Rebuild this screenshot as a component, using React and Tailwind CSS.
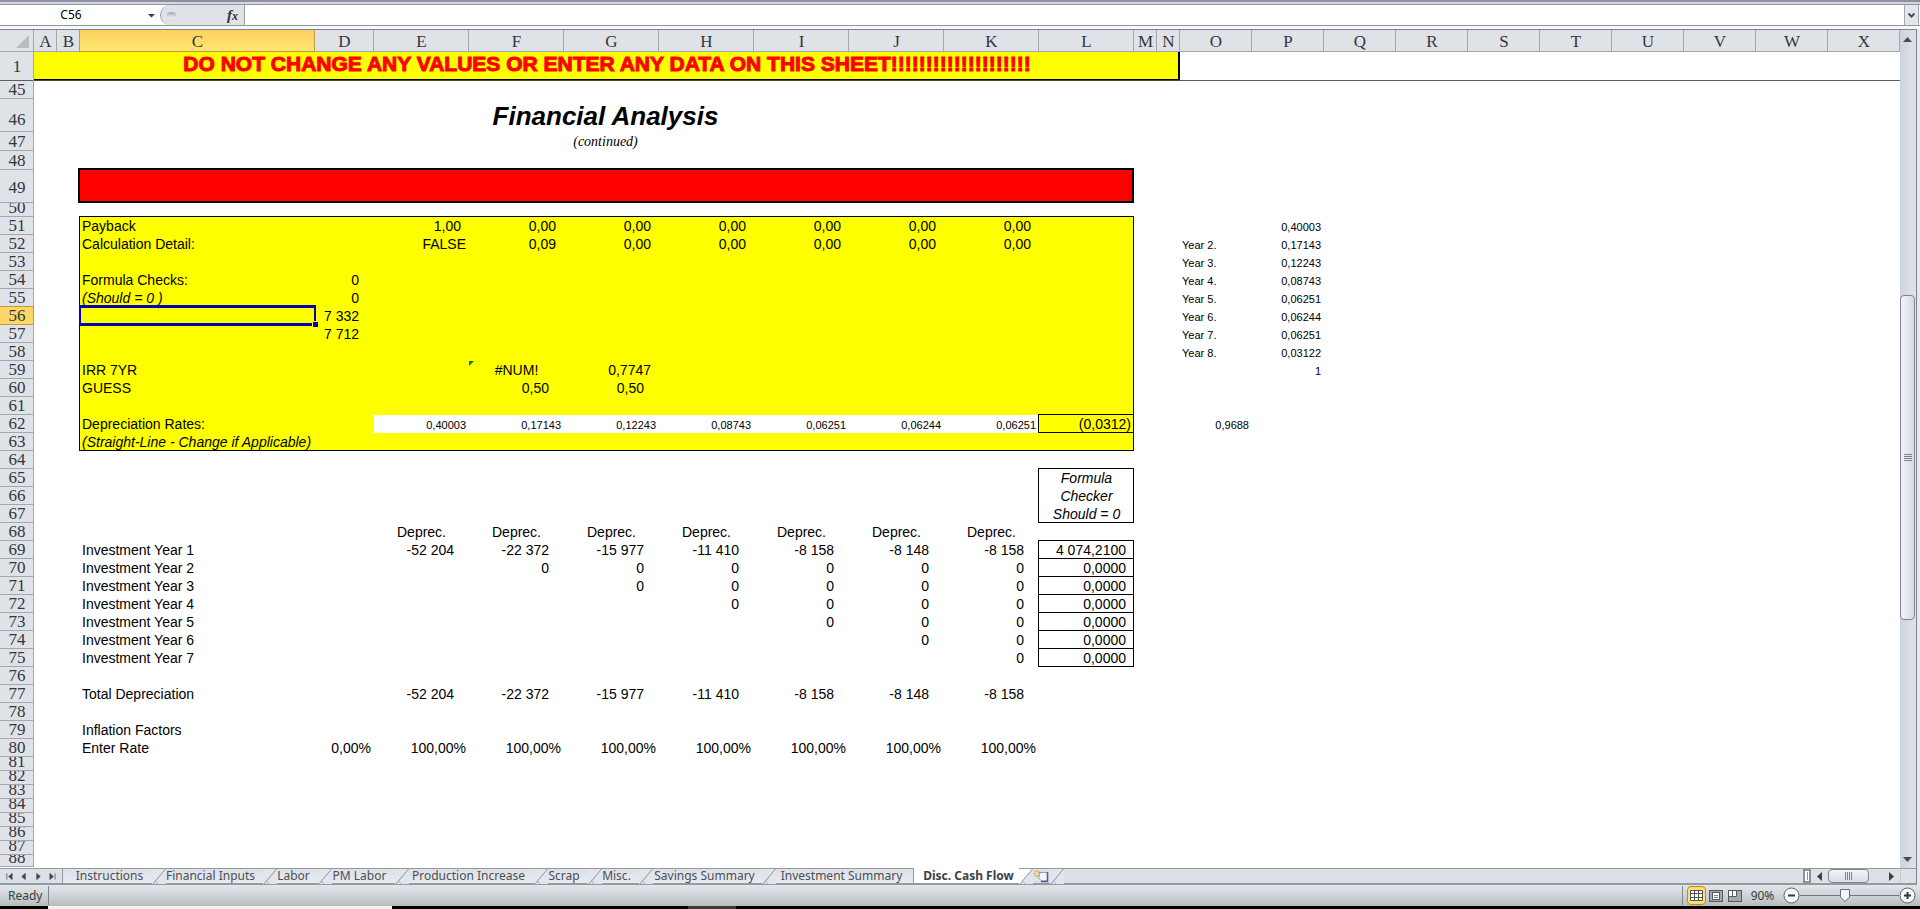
import React from "react";

const COLUMNS = [
  ["A", "w-[23px]"],
  ["B", "w-[23px]"],
  ["C", "w-[235px]"],
  ["D", "w-[59px]"],
  ["E", "w-[95px]"],
  ["F", "w-[95px]"],
  ["G", "w-[95px]"],
  ["H", "w-[95px]"],
  ["I", "w-[95px]"],
  ["J", "w-[95px]"],
  ["K", "w-[95px]"],
  ["L", "w-[95px]"],
  ["M", "w-[23px]"],
  ["N", "w-[23px]"],
  ["O", "w-[72px]"],
  ["P", "w-[72px]"],
  ["Q", "w-[72px]"],
  ["R", "w-[72px]"],
  ["S", "w-[72px]"],
  ["T", "w-[72px]"],
  ["U", "w-[72px]"],
  ["V", "w-[72px]"],
  ["W", "w-[72px]"],
  ["X", ""],
];
const LETTERS = COLUMNS.map(([c]) => c);
const YEARS = ["E", "F", "G", "H", "I", "J", "K"];

const LABEL = "pl-0.5 text-left";
const NOTE = "pl-0.5 text-left italic";
const EDGE = "pr-[3px] text-right";
const NUM = "pr-2 text-right";
const ACC = "pr-[15px] text-right";
const MID = "text-center";
const SMALL = "pr-[3px] text-right text-[11px] leading-4";
const SMALL_LABEL = "pl-0.5 text-left text-[11px] leading-4";

const BOX =
  "shadow-[-1px_-1px_0_#000,0_-1px_0_#000,-1px_0_0_#000,inset_-1px_-1px_0_#000]";

const across = (values, cls, from = 0) =>
  Object.fromEntries(values.map((v, i) => [YEARS[i + from], [v, cls]]));
const repeat = (v, n) => Array(n).fill(v);

const DEPRECIATION = ["-52 204", "-22 372", "-15 977", "-11 410", "-8 158", "-8 148", "-8 158"];

const DATA = {
  51: { C: ["Payback", LABEL], ...across(["1,00", ...repeat("0,00", 6)], NUM), P: ["0,40003", SMALL] },
  52: {
    C: ["Calculation Detail:", LABEL],
    ...across(["0,09", ...repeat("0,00", 5)], NUM, 1),
    E: ["FALSE", EDGE],
    O: ["Year 2.", SMALL_LABEL],
    P: ["0,17143", SMALL],
  },
  53: { O: ["Year 3.", SMALL_LABEL], P: ["0,12243", SMALL] },
  54: { C: ["Formula Checks:", LABEL], D: ["0", ACC], O: ["Year 4.", SMALL_LABEL], P: ["0,08743", SMALL] },
  55: { C: ["(Should = 0 )", NOTE], D: ["0", ACC], O: ["Year 5.", SMALL_LABEL], P: ["0,06251", SMALL] },
  56: { D: ["7 332", ACC], O: ["Year 6.", SMALL_LABEL], P: ["0,06244", SMALL] },
  57: { D: ["7 712", ACC], O: ["Year 7.", SMALL_LABEL], P: ["0,06251", SMALL] },
  58: { O: ["Year 8.", SMALL_LABEL], P: ["0,03122", SMALL] },
  59: { C: ["IRR 7YR", LABEL], F: ["#NUM!", MID], G: ["0,7747", NUM], P: ["1", SMALL] },
  60: { C: ["GUESS", LABEL], F: ["0,50", ACC], G: ["0,50", ACC] },
  62: {
    C: ["Depreciation Rates:", LABEL],
    ...across(["0,40003", "0,17143", "0,12243", "0,08743", "0,06251", "0,06244", "0,06251"], SMALL),
    L: ["(0,0312)", EDGE],
    O: ["0,9688", SMALL],
  },
  63: { C: ["(Straight-Line - Change if Applicable)", NOTE] },
  65: { L: ["Formula", "text-center italic"] },
  66: { L: ["Checker", "text-center italic"] },
  67: { L: ["Should = 0", "text-center italic"] },
  68: across(repeat("Deprec.", 7), MID),
  69: { C: ["Investment Year 1", LABEL], ...across(DEPRECIATION, ACC), L: ["4 074,2100", NUM] },
  77: { C: ["Total Depreciation", LABEL], ...across(DEPRECIATION, ACC) },
  79: { C: ["Inflation Factors", LABEL] },
  80: { C: ["Enter Rate", LABEL], D: ["0,00%", EDGE], ...across(repeat("100,00%", 7), EDGE) },
};
for (let i = 1; i <= 6; i += 1) {
  DATA[69 + i] = {
    C: [`Investment Year ${i + 1}`, LABEL],
    ...across(repeat("0", 7 - i), ACC, i),
    L: ["0,0000", NUM],
  };
}

function rowHeight(n) {
  if (n === 88) return "h-[12px]";
  if (n === 50 || n > 80) return "h-[14px]";
  if (n === 47 || n === 48) return "h-[19px]";
  return "h-[18px]";
}

function boxStyle(n, col) {
  const out = [];
  if (n >= 51 && n <= 63 && col >= "C" && col <= "L") {
    out.push(n === 62 && col >= "E" && col <= "K" ? "bg-white" : "bg-[#ffff00]");
    if (n === 62 && col === "L") out.push(BOX);
    else if (n === 51) {
      if (col === "C") out.push("shadow-[-1px_-1px_0_#000,0_-1px_0_#000,-1px_0_0_#000]");
      else if (col === "L") out.push("shadow-[0_-1px_0_#000,inset_-1px_0_0_#000]");
      else out.push("shadow-[0_-1px_0_#000]");
    } else if (n === 63) {
      if (col === "C") out.push("shadow-[-1px_0_0_#000,inset_0_-1px_0_#000]");
      else if (col === "L") out.push("shadow-[inset_-1px_-1px_0_#000]");
      else out.push("shadow-[inset_0_-1px_0_#000]");
    } else if (col === "C") out.push("shadow-[-1px_0_0_#000]");
    else if (col === "L") out.push("shadow-[inset_-1px_0_0_#000]");
  }
  if (col === "L") {
    if (n === 65)
      out.push("shadow-[-1px_-1px_0_#000,0_-1px_0_#000,-1px_0_0_#000,inset_-1px_0_0_#000]");
    if (n === 66) out.push("shadow-[-1px_0_0_#000,inset_-1px_0_0_#000]");
    if (n === 67) out.push("shadow-[-1px_0_0_#000,inset_-1px_-1px_0_#000]");
    if (n >= 69 && n <= 75) out.push(BOX);
  }
  return out.join(" ");
}

function RowHead({ n, className = "items-end", height }) {
  const tone =
    n === 56
      ? "bg-[#fcd666] shadow-[0_-1px_0_#c9983c,inset_-1px_-1px_0_#c9983c]"
      : n === 1
        ? "bg-[#dfe3e8] shadow-[inset_-1px_0_0_#a3a8ae,inset_0_-1px_0_#5a5d62]"
        : "bg-[#dfe3e8] shadow-[inset_-1px_-1px_0_#a3a8ae]";
  return (
    <th scope="row" className={`p-0 align-top font-normal ${tone}`}>
      <div
        className={`flex justify-center overflow-hidden font-['Liberation_Serif',serif] text-[17px] leading-[18px] text-[#33363b] ${className} ${height || rowHeight(n)}`}
      >
        {n}
      </div>
    </th>
  );
}

function SheetRow({ n }) {
  const cells = DATA[n] || {};
  return (
    <tr>
      <RowHead n={n} />
      {LETTERS.map((col) => {
        const [text, cls] = cells[col] || ["", ""];
        const active = n === 56 && col === "C";
        const flagged = n === 59 && col === "F";
        return (
          <td
            key={col}
            className={`p-0 align-bottom whitespace-nowrap ${boxStyle(n, col)} ${cls} ${active || flagged ? "relative" : ""}`}
          >
            {text}
            {active && (
              <div className="absolute -top-0.5 -right-px -bottom-px -left-px border-x-2 border-y-3 border-[#0404b4]">
                <div className="absolute -right-1 -bottom-1 size-1.5 border-t border-l border-[#ffff00] bg-[#0404b4]" />
              </div>
            )}
            {flagged && (
              <svg className="absolute top-0 left-0 size-[5px]" viewBox="0 0 5 5">
                <path d="M0 0H5L0 5Z" fill="#0c7a12" />
              </svg>
            )}
          </td>
        );
      })}
    </tr>
  );
}

function range(a, b) {
  return Array.from({ length: b - a + 1 }, (_, i) => a + i);
}

function Sheet() {
  return (
    <table className="w-full table-fixed border-separate border-spacing-0 bg-white font-['Liberation_Sans',Arial,sans-serif] text-[14px] leading-[18px] text-black">
      <colgroup>
        <col className="w-[34px]" />
        {COLUMNS.map(([c, w]) => (
          <col key={c} className={w} />
        ))}
      </colgroup>
      <thead>
        <tr className="font-['Liberation_Serif',serif] text-[17px] text-[#33363b]">
          <td className="h-[22px] bg-[#dfe3e8] p-0 align-bottom shadow-[inset_-1px_-1px_0_#a3a8ae]">
            <svg className="mb-1 ml-[16px] block size-[13px]" viewBox="0 0 13 13">
              <path d="M13 0V13H0Z" fill="#b9bdc2" />
            </svg>
          </td>
          {LETTERS.map((c) => (
            <th
              key={c}
              scope="col"
              className={`h-[22px] p-0 pt-0.5 font-normal ${
                c === "C"
                  ? "bg-linear-to-b from-[#fbd060] to-[#ffe873] shadow-[-1px_0_0_#c9983c,inset_-1px_-1px_0_#c9983c]"
                  : "bg-[#dfe3e8] shadow-[inset_-1px_-1px_0_#a3a8ae]"
              }`}
            >
              {c}
            </th>
          ))}
        </tr>
      </thead>
      <tbody>
        <tr>
          <RowHead n={1} className="items-center" height="h-[29px]" />
          <td
            colSpan={14}
            className="bg-[#ffff00] p-0 text-center align-top text-[21px] leading-6 font-bold whitespace-nowrap text-[#ff0000] shadow-[inset_0_-1px_0_#4a4a30,inset_-2px_-2px_0_#000] [-webkit-text-stroke:1px_#ff0000]"
          >
            DO NOT CHANGE ANY VALUES OR ENTER ANY DATA ON THIS SHEET!!!!!!!!!!!!!!!!!!!!
          </td>
          <td colSpan={10} className="p-0 shadow-[inset_0_-1px_0_#5a5d62]" />
        </tr>
        <SheetRow n={45} />
        <tr>
          <RowHead n={46} className="items-end pb-[3px]" height="h-[33px]" />
          <td colSpan={2} className="p-0" />
          <td
            colSpan={10}
            className="p-0 pr-[3px] text-center align-bottom text-[26px] leading-8 font-bold italic"
          >
            Financial Analysis
          </td>
          <td colSpan={12} className="p-0" />
        </tr>
        <tr>
          <RowHead n={47} />
          <td colSpan={2} className="p-0" />
          <td
            colSpan={10}
            className="p-0 pr-[3px] text-center align-bottom font-['Liberation_Serif',serif] text-[14px] italic"
          >
            (continued)
          </td>
          <td colSpan={12} className="p-0" />
        </tr>
        <SheetRow n={48} />
        <tr>
          <RowHead n={49} className="items-center pt-0.5" height="h-[33px]" />
          <td colSpan={2} className="p-0" />
          <td
            colSpan={10}
            className="bg-[#ff0000] p-0 shadow-[-2px_-2px_0_#000,0_-2px_0_#000,-2px_0_0_#000,inset_-2px_-2px_0_#000]"
          />
          <td colSpan={12} className="p-0" />
        </tr>
        {range(50, 88).map((n) => (
          <SheetRow key={n} n={n} />
        ))}
      </tbody>
    </table>
  );
}

function FormulaBar() {
  return (
    <div className="border-t-2 border-[#8c8f9c] bg-linear-to-b from-[#d3d6de] to-[#e4e7ee] pt-0.5">
      <div className="flex h-[22px] items-stretch border-y border-[#8f959e] bg-white font-['Noto_Sans',sans-serif] text-[12px]">
        <input
          aria-label="Name Box"
          defaultValue="C56"
          className="w-[142px] bg-white text-center text-black outline-none"
        />
        <button aria-label="Name list" className="flex w-[18px] items-center justify-center">
          <svg className="size-[7px]" viewBox="0 0 7 7">
            <path d="M0 2H7L3.5 5.5Z" fill="#3c3f44" />
          </svg>
        </button>
        <div className="flex w-[85px] items-center justify-between rounded-l-full border-r border-l border-[#9aa0a8] bg-[#dfe3e8] pr-1.5 pl-1.5">
          <span className="h-[6px] w-[9px] rounded-full bg-linear-to-b from-[#a9adb3] to-[#eceef1]" />
          <button
            aria-label="Insert Function"
            className="font-['Liberation_Serif',serif] text-[15px] leading-4 font-bold text-[#303338] italic"
          >
            f<span className="text-[12px]">x</span>
          </button>
        </div>
        <input aria-label="Formula" className="min-w-0 flex-1 bg-white px-1 outline-none" />
        <button
          aria-label="Expand Formula Bar"
          className="mr-px flex w-[15px] items-center justify-center border-x border-[#a3a8ae] bg-[#e3e7ec]"
        >
          <svg className="size-[7px]" viewBox="0 0 7 7">
            <path d="M0.5 1.5L3.5 4.5L6.5 1.5" fill="none" stroke="#4a4d55" strokeWidth="2" />
          </svg>
        </button>
      </div>
      <div className="h-[3px] bg-[#f6f8fa]" />
    </div>
  );
}

function VerticalScroll() {
  return (
    <div className="flex w-4 flex-col bg-linear-to-r from-[#cdd3da] to-[#dfe4ea] pr-px">
      <button aria-label="Scroll up" className="flex h-[18px] items-center justify-center">
        <svg className="h-[5px] w-[9px]" viewBox="0 0 9 5">
          <path d="M0 5H9L4.5 0Z" fill="#484b52" />
        </svg>
      </button>
      <div className="flex flex-1 flex-col">
        <div className="grow-[248] basis-0" />
        <div className="flex grow-[323] basis-0 flex-col items-center justify-center gap-px rounded-sm border border-[#7f858e] bg-linear-to-r from-[#f1f4f8] to-[#d5d9e6]">
          <span className="h-px w-2 bg-[#7d828b]" />
          <span className="h-px w-2 bg-[#7d828b]" />
          <span className="h-px w-2 bg-[#7d828b]" />
          <span className="h-px w-2 bg-[#7d828b]" />
        </div>
        <div className="grow-[231] basis-0" />
      </div>
      <button aria-label="Scroll down" className="flex h-[18px] items-center justify-center">
        <svg className="h-[5px] w-[9px]" viewBox="0 0 9 5">
          <path d="M0 0H9L4.5 5Z" fill="#484b52" />
        </svg>
      </button>
    </div>
  );
}

const TABS = [
  ["Instructions", "w-[89px] pl-1"],
  ["Financial Inputs", "w-[97px] pr-2"],
  ["Labor", "w-[41px] pr-2"],
  ["PM Labor", "w-[63px] pr-2"],
  ["Production Increase", "w-[125px] pr-1.5"],
  ["Scrap", "w-[40px] pr-2"],
  ["Misc.", "w-[37px] pr-2"],
  ["Savings Summary", "w-[109px] pr-1.5"],
];

function Slant({ fill = "#e2e6ec" }) {
  return (
    <svg className="block h-[15px] w-3.5 shrink-0" viewBox="0 0 14 15">
      <rect width="14" height="15" fill="#e2e6ec" />
      <path d="M0 0H13L1 15H0Z" fill={fill} />
      <path d="M13.5 0L1 15" stroke="#8d939c" fill="none" />
      <path d="M3.5 12L6 15" stroke="#a9aeb5" fill="none" />
    </svg>
  );
}

const NAV = [
  ["First sheet", "M1 0V7M7 0L3 3.5L7 7Z"],
  ["Previous sheet", "M6 0L2 3.5L6 7Z"],
  ["Next sheet", "M2 0L6 3.5L2 7Z"],
  ["Last sheet", "M7 0V7M1 0L5 3.5L1 7Z"],
];

function TabBar() {
  return (
    <div className="flex h-[17px] items-stretch border-b-2 border-[#949aa2] bg-[#dce1e7] font-['Noto_Sans',sans-serif] text-[12px] leading-[14px] text-[#4b4f55]">
      <div className="flex w-[62px] items-center justify-around border-t border-[#949aa2] px-0.5">
        {NAV.map(([label, d]) => (
          <button key={label} aria-label={label}>
            <svg className="block size-[7px] overflow-visible" viewBox="0 0 8 7">
              <path d={d} fill="#41464d" stroke="#41464d" strokeWidth="0.8" />
            </svg>
          </button>
        ))}
      </div>
      <div className="flex border-t border-l border-[#949aa2] bg-linear-to-b from-[#dce0e7] to-[#e8ebf0]">
        {TABS.map(([t, w]) => (
          <React.Fragment key={t}>
            <button className={`flex items-center justify-center whitespace-nowrap ${w}`}>{t}</button>
            <Slant />
          </React.Fragment>
        ))}
        <button className="flex w-[137px] items-center justify-center pr-1.5 whitespace-nowrap">
          Investment Summary
        </button>
      </div>
      <button className="flex w-[106px] items-center justify-center border-l border-[#949aa2] bg-white pl-1 font-bold whitespace-nowrap text-[#3c4045]">
        Disc. Cash Flow
      </button>
      <div className="flex flex-1 border-t border-[#949aa2]">
        <Slant fill="#ffffff" />
        <button aria-label="Insert Worksheet" className="w-[17px]">
          <svg className="block h-[15px] w-[17px]" viewBox="0 0 17 15">
            <path d="M6 3.5H14.5V12H8.5L6 9.5Z" fill="#f2f5fb" stroke="#8e9dc0" />
            <path d="M14.5 3V12.5H8" stroke="#4a5d92" strokeWidth="1.5" fill="none" />
            <path d="M4 1V8M0.5 4.5H7.5M1.5 2L6.5 7M6.5 2L1.5 7" stroke="#e0952a" fill="none" />
            <circle cx="4" cy="4.5" r="1.5" fill="#fff0b0" />
          </svg>
        </button>
        <Slant />
        <div className="flex-1" />
        <div className="flex w-[97px] items-stretch">
          <div className="flex w-2 items-center justify-center border-2 border-[#8b9099] bg-white">
            <span className="h-2 w-px bg-[#8b9099]" />
          </div>
          <button aria-label="Scroll left" className="flex w-[17px] items-center justify-center">
            <svg className="h-[9px] w-[5px]" viewBox="0 0 5 9">
              <path d="M5 0V9L0 4.5Z" fill="#3c3f46" />
            </svg>
          </button>
          <div className="flex w-[41px] items-center justify-center gap-px rounded-sm border border-[#7f858e] bg-linear-to-b from-[#f4f6f9] to-[#d8dce5]">
            <span className="h-2 w-px bg-[#7d828b]" />
            <span className="h-2 w-px bg-[#7d828b]" />
            <span className="h-2 w-px bg-[#7d828b]" />
            <span className="h-2 w-px bg-[#7d828b]" />
          </div>
          <span className="flex-1" />
          <button aria-label="Scroll right" className="flex w-[17px] items-center justify-center">
            <svg className="h-[9px] w-[5px]" viewBox="0 0 5 9">
              <path d="M0 0V9L5 4.5Z" fill="#3c3f46" />
            </svg>
          </button>
        </div>
        <div className="w-4 border-l border-[#c3c8ce]" />
      </div>
    </div>
  );
}

function StatusBar() {
  return (
    <div className="flex h-[21px] items-center bg-linear-to-b from-[#e3e6eb] via-[#cfd3d8] to-[#b5bdbe] font-['Noto_Sans',sans-serif] text-[12px] text-[#3a3e43]">
      <span className="w-[48px] pl-2">Ready</span>
      <span className="h-[19px] w-px bg-[#7f878b]" />
      <span className="flex-1" />
      <span className="mr-1 h-[19px] w-px bg-[#7f878b]" />
      <button
        aria-label="Normal view"
        className="flex size-[19px] items-center justify-center rounded-sm border border-[#c08a20] bg-[#fde070]"
      >
        <svg className="h-[11px] w-[13px]" viewBox="0 0 13 11">
          <path
            d="M0.5 0.5H12.5V10.5H0.5ZM0.5 3.5H12.5M0.5 7.5H12.5M4.5 0.5V10.5M8.5 0.5V10.5"
            fill="#ffffff"
            stroke="#4f5358"
          />
        </svg>
      </button>
      <button aria-label="Page Layout" className="ml-[3px]">
        <svg className="block h-[12px] w-[14px]" viewBox="0 0 14 12">
          <rect x="0.5" y="0.5" width="13" height="11" fill="#a5a9af" stroke="#54585e" />
          <rect x="3.5" y="2.5" width="7" height="7" fill="#fff" stroke="#54585e" />
          <path d="M5 5.5H9M5 7.5H9" stroke="#7b7f85" />
        </svg>
      </button>
      <button aria-label="Page Break Preview" className="ml-[5px]">
        <svg className="block h-[12px] w-[14px]" viewBox="0 0 14 12">
          <rect x="0.5" y="0.5" width="13" height="11" fill="#a5a9af" stroke="#54585e" />
          <path d="M0.5 0.5H8.5V6.5H0.5ZM4.5 0.5V6.5" fill="#fff" stroke="#54585e" />
        </svg>
      </button>
      <button className="w-[41px] text-center">90%</button>
      <button aria-label="Zoom out">
        <svg className="block size-[17px]" viewBox="0 0 17 17">
          <circle cx="8.5" cy="8.5" r="7.5" fill="#f7f8fa" stroke="#5c6066" />
          <path d="M5 8.5H12" stroke="#33373c" strokeWidth="2" />
        </svg>
      </button>
      <div className="relative h-[17px] w-[99px]">
        <div className="absolute inset-x-0 top-2 h-px bg-[#73787e]" />
        <svg className="absolute top-0.5 left-[40px] h-[13px] w-[10px]" viewBox="0 0 10 13">
          <path d="M0.5 0.5H9.5V8L5 12.5L0.5 8Z" fill="#f2f4f6" stroke="#6a6f75" />
        </svg>
        <input
          type="range"
          aria-label="Zoom"
          min="10"
          max="400"
          defaultValue="90"
          className="absolute inset-0 w-full opacity-0"
        />
      </div>
      <button aria-label="Zoom in" className="mr-1">
        <svg className="block size-[17px]" viewBox="0 0 17 17">
          <circle cx="8.5" cy="8.5" r="7.5" fill="#f7f8fa" stroke="#5c6066" />
          <path d="M5 8.5H12M8.5 5V12" stroke="#33373c" strokeWidth="2" />
        </svg>
      </button>
    </div>
  );
}

export default function App() {
  return (
    <div className="flex min-h-screen w-full flex-col overflow-hidden bg-[#e6eaf0]">
      <FormulaBar />
      <div className="mr-[3px] flex flex-1 flex-col border-t border-r border-[#7d848d]">
        <div className="flex flex-1 items-stretch">
          <div className="min-w-0 flex-1 bg-white">
            <Sheet />
          </div>
          <VerticalScroll />
        </div>
        <TabBar />
      </div>
      <StatusBar />
      <div className="flex h-[3px] bg-black">
        <span className="ml-[48px] w-[344px] bg-[#f4f4f4]" />
        <span className="ml-[296px] w-[48px] bg-[#3a3a3a]" />
      </div>
    </div>
  );
}
